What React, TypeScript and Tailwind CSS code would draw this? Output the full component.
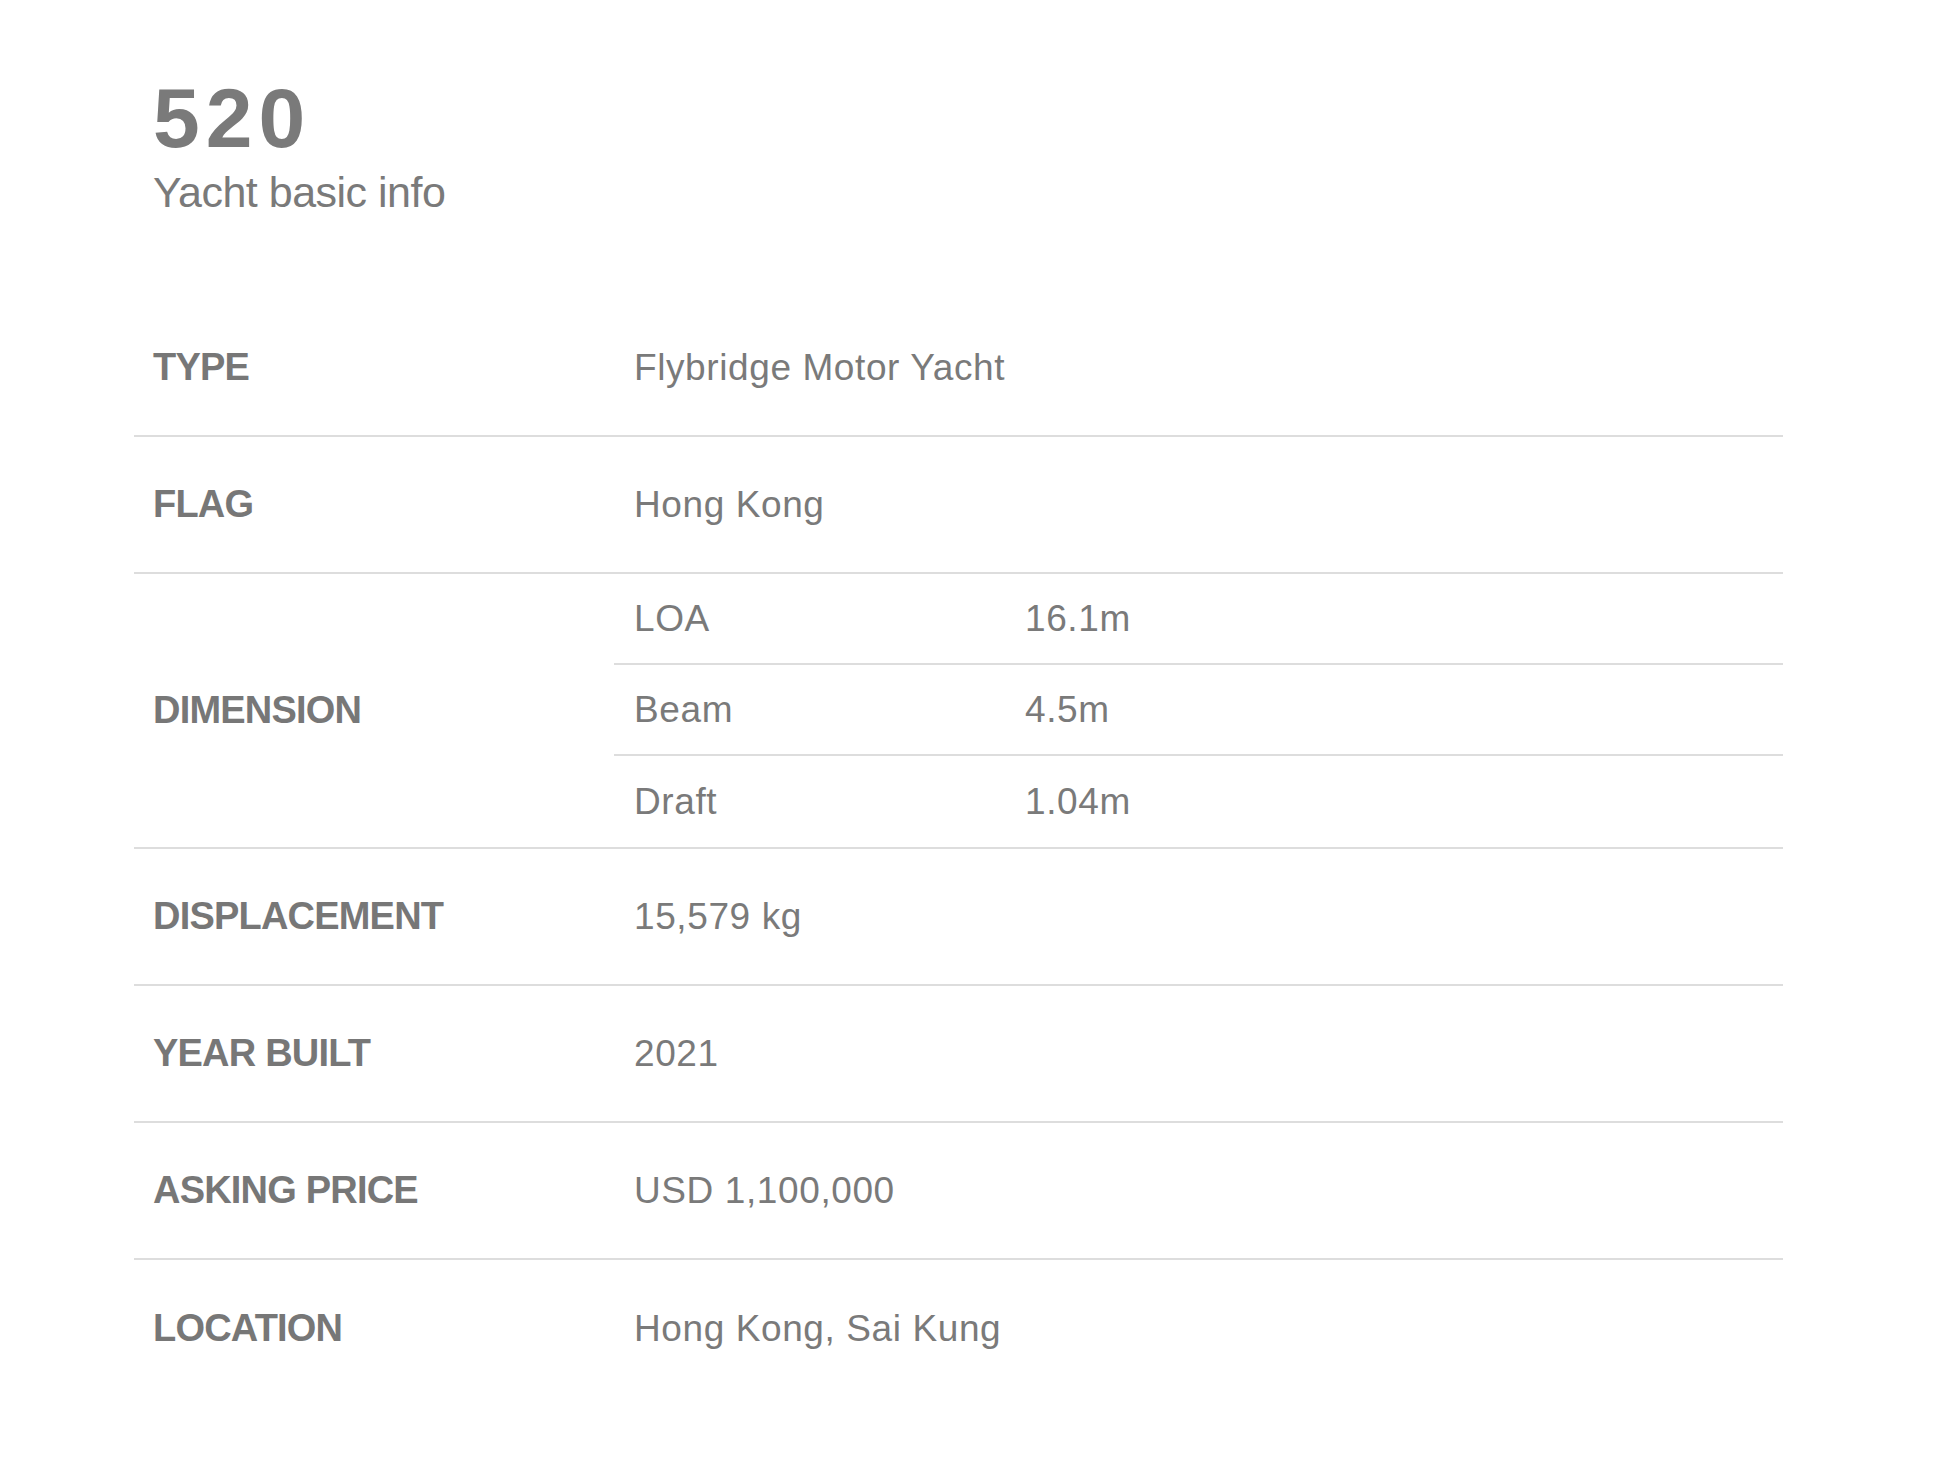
const specs: { label: string; value: string }[] = [
  { label: "TYPE", value: "Flybridge Motor Yacht" },
  { label: "FLAG", value: "Hong Kong" },
];

const more: { label: string; value: string }[] = [
  { label: "DISPLACEMENT", value: "15,579 kg" },
  { label: "YEAR BUILT", value: "2021" },
  { label: "ASKING PRICE", value: "USD 1,100,000" },
  { label: "LOCATION", value: "Hong Kong, Sai Kung" },
];

const dimensions = [
  { name: "LOA", value: "16.1m" },
  { name: "Beam", value: "4.5m" },
  { name: "Draft", value: "1.04m" },
];

const font = { fontFamily: '"Liberation Sans", Arial, sans-serif' };

const Label = ({ text }: { text: string }) => (
  <div className="w-[480px] shrink-0 pl-[19px] text-[38px] font-bold text-[#777777] tracking-[-0.8px]" style={font}>
    {text}
  </div>
);

const Row = ({ label, value, last }: { label: string; value: string; last?: boolean }) => (
  <div className={"flex items-center h-[137px] " + (last ? "" : "border-b-2 border-[#dddddd]")}>
    <Label text={label} />
    <div className="px-5 text-[37px] text-[#7a7a7a] tracking-[0.6px]" style={font}>
      {value}
    </div>
  </div>
);

export default function App() {
  return (
    <div className="min-h-screen bg-white pl-[134px] pr-[163px] pt-[76px]">
      <div className="pl-[19px]">
        <h1 className="text-[84px] font-bold leading-none text-[#7a7a7a] tracking-[6px]" style={font}>
          520
        </h1>
        <p className="mt-[6px] text-[43px] leading-tight text-[#7a7a7a] tracking-[-0.5px]" style={font}>
          Yacht basic info
        </p>
      </div>

      <div className="mt-[80px]">
        {specs.map((s) => (
          <Row key={s.label} label={s.label} value={s.value} />
        ))}

        <div className="flex items-center border-b-2 border-[#dddddd]">
          <Label text="DIMENSION" />
          <div className="flex-1">
            {dimensions.map((d, i) => (
              <div
                key={d.name}
                className={
                  "flex items-center h-[91px] text-[37px] text-[#7a7a7a] tracking-[0.6px] " +
                  (i < dimensions.length - 1 ? "border-b-2 border-[#dddddd]" : "")
                }
                style={font}
              >
                <div className="w-[411px] px-5">{d.name}</div>
                <div>{d.value}</div>
              </div>
            ))}
          </div>
        </div>

        {more.map((s, i) => (
          <Row key={s.label} label={s.label} value={s.value} last={i === more.length - 1} />
        ))}
      </div>
    </div>
  );
}
